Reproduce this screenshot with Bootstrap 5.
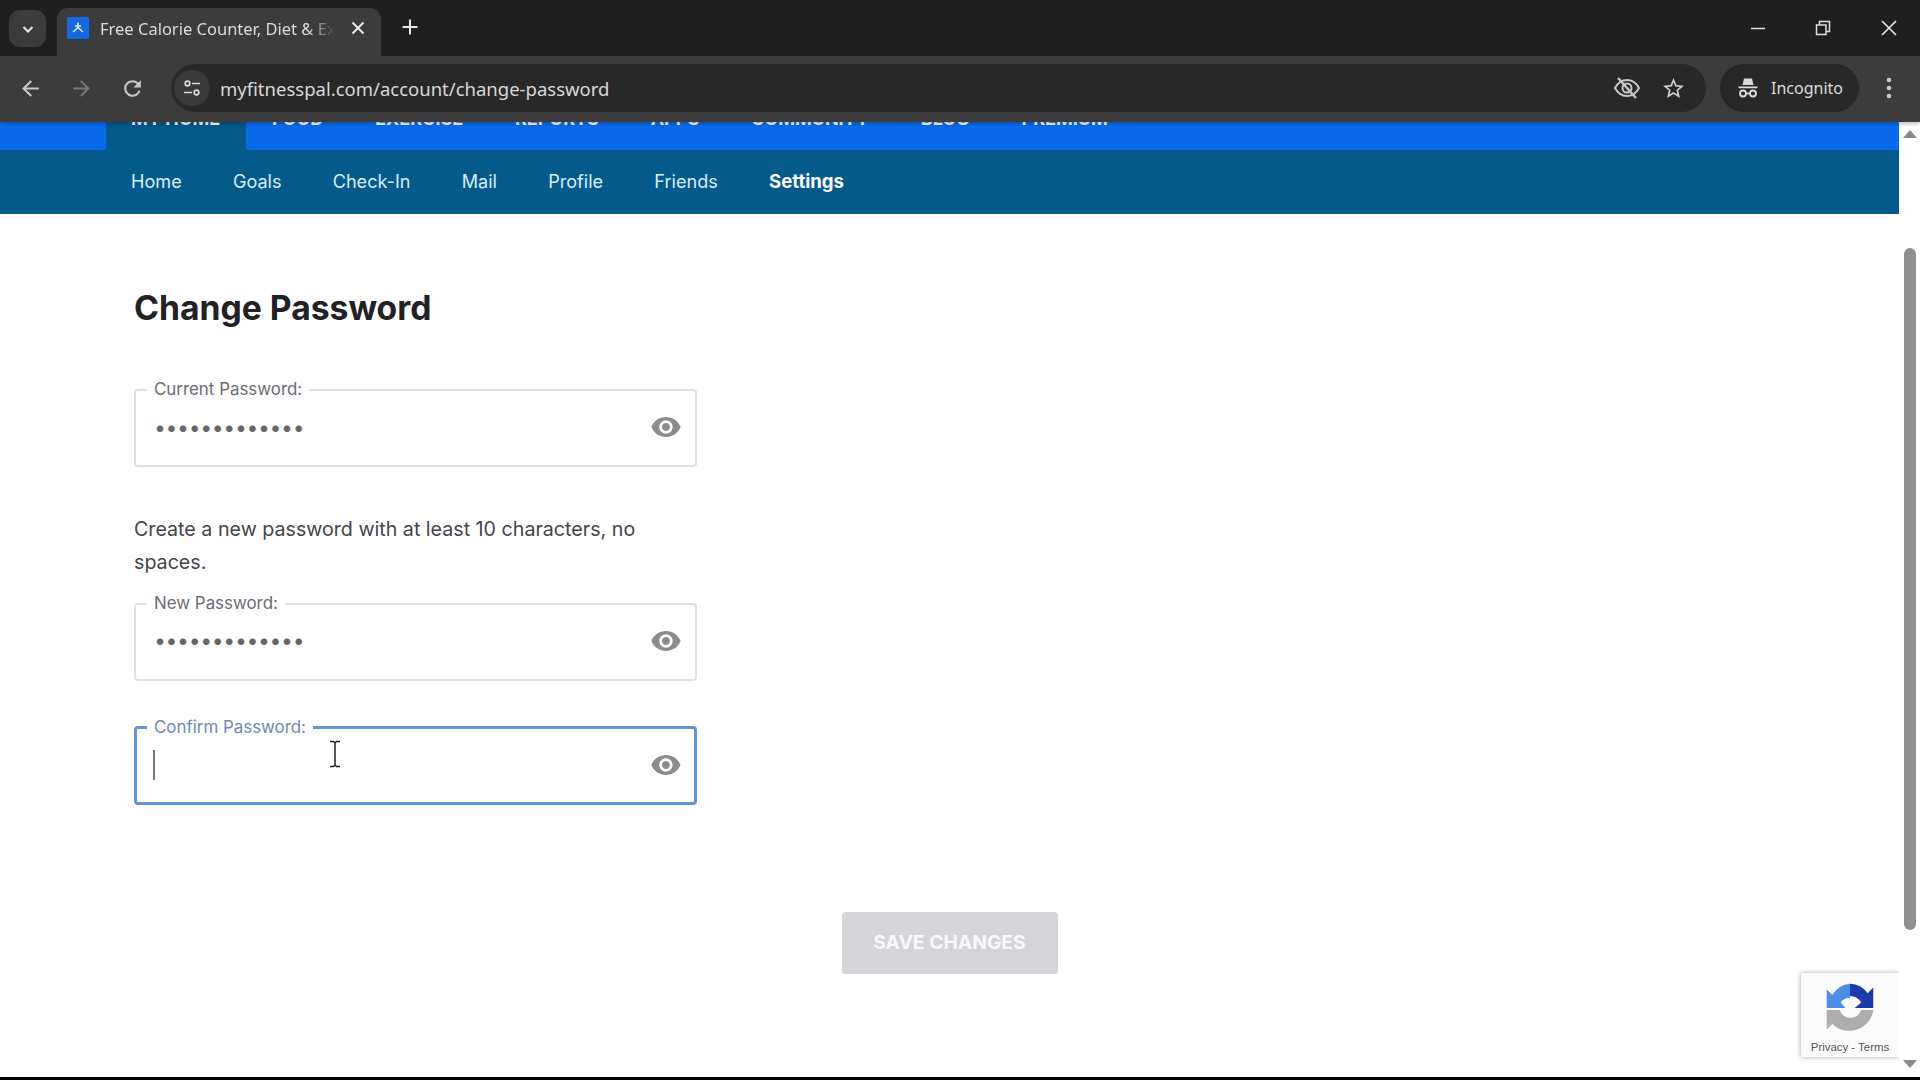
<!DOCTYPE html>
<html lang="en">
<head>
<meta charset="utf-8">
<title>Change Password</title>
<link href="https://cdn.jsdelivr.net/npm/bootstrap@5.3.0/dist/css/bootstrap.min.css" rel="stylesheet">
<style>
html,body{height:100%;overflow:hidden;margin:0;background:#000}
.shell{height:1077px;display:flex;flex-direction:column;font-family:Inter,"Liberation Sans",sans-serif}
.tabstrip{height:56px;background:#1f1f1f;flex:none;color:#e6e6e6}
.tabbtn{width:37px;height:37px;margin:10px 0 0 9px;background:#3b3b3b;border-radius:11px}
.ctab{width:324px;height:48px;margin:8px 0 0 11px;background:#3c3c3c;border-radius:11px 11px 0 0;padding:0 15px 8px 10px;font:16.5px "Noto Sans",Roboto,sans-serif;color:#dcdcdc}
.fav{width:22px;height:22px;background:#1669e0;border-radius:2px;flex:none}
.tabname{width:235px;overflow:hidden;white-space:nowrap;margin-left:11px;-webkit-mask-image:linear-gradient(90deg,#000 88%,transparent);mask-image:linear-gradient(90deg,#000 88%,transparent)}
.plusbox{padding-bottom:2px}
.wctl{margin-left:auto;gap:49px;padding-right:22px}
.toolbar{height:66px;background:#3c3c3c;flex:none;padding:0 0 2px 18px;box-shadow:0 2px 4px rgba(0,0,0,.25);position:relative;z-index:2}
.tbicons{gap:26px;width:144px}
.omni{width:1535px;height:48px;background:#282828;border-radius:24px;padding:0 20.5px 0 3px;margin-left:9px;font:18.500px "Noto Sans",Roboto,sans-serif;color:#d8d8d8;white-space:nowrap}
.sitebtn{width:36px;height:36px;background:#3a3a3a;border-radius:50%;margin-right:10px;flex:none}
.omniend{margin-left:auto;gap:19.5px}
.incog{width:139px;height:48px;background:#282828;border-radius:24px;margin-left:14px;padding-left:17px;gap:12px;font:16px "Noto Sans",Roboto,sans-serif;color:#dcdcdc}
.kebab{margin-left:26px}
.viewport{flex:1;min-height:0;overflow:hidden;background:#fff;position:relative}
.pagecol{flex:1;min-width:0;position:relative}
.bluebar{margin-top:-32px;height:60px;background:#0a6bea;padding-left:106px;font-weight:700;font-size:18px;line-height:24px;color:#fff;text-transform:uppercase}
.bluebar .topitem{padding:17px 25.9px 0 25px;margin-right:.9px}
.bluebar .topon{background:#055a8c}
.subbar{height:64px;background:#055a8c;padding-left:106px;font-size:18.1px;color:#d8eefb}
.subbar .subitem{padding:0 26.2px 0 25px}
.subbar .subon{font-weight:700;font-size:18.6px;color:#fff}
.formwrap{padding:74px 0 0 134px;width:697px;box-sizing:border-box}
.pagetitle{font-size:33.7px;line-height:40px;font-weight:700;color:#212126;margin:0 0 51px}
.pwfield{border:2px solid #e0e0e0;border-radius:4px;padding:0 13.5px 0 17px;margin:0;height:88px}
.pwfield legend{float:none;width:auto;margin:-1px 0 0 -6px;padding:0 7px 2px;font-size:16.9px;line-height:20px;color:#6c6c72}
.pwfield .form-control{border:0;padding:0 0 0 2px;background:transparent;box-shadow:none;font-size:21px;font-weight:700;letter-spacing:1.6px;color:#666;height:64px;border-radius:0}
.fieldbody{height:60px;margin-top:-4px}
.pwfield.focused{border:3px solid #6294d8;padding-left:16px;padding-right:12.5px}
.pwfield.focused legend{color:#6f88b8}
.caretbar{width:2px;height:30px;background:#777;flex:none}
.helptext{font-size:19.67px;line-height:33.3px;color:#45454a;margin:46px 0 13px}
.gapfield{margin-top:36px}
.savebtn{width:216px;height:62px;background:#d4d4d9;border:0;border-radius:4px;color:#f8f8fa;font-weight:700;font-size:19.3px;margin-top:107px}
.savebtn:disabled{background:#d4d4d9;color:#f8f8fa;opacity:1}
.scrolltrack{width:21px;flex:none;background:#fff;position:relative}
.thumb{width:12px;height:682px;background:#8f8f8f;border-radius:6px;margin:126px 0 0 5px}
.arr{width:0;height:0;border-left:7px solid transparent;border-right:7px solid transparent;position:absolute;left:4px}
.arrup{border-bottom:8px solid #8a8a8a;top:8px}
.arrdn{border-top:8px solid #8a8a8a;bottom:9px}
.beam{position:absolute;left:328px;top:618px}
.recap{position:absolute;right:0;bottom:20px;width:98px;height:84px;background:#fbfbfb;box-shadow:0 0 5px rgba(0,0,0,.35);font:11.4px "Liberation Sans",sans-serif;color:#555;padding-top:9px}
.recap svg{display:block;margin:0 auto 5px}
</style>
</head>
<body>
<div class="shell">
  <div class="tabstrip d-flex">
    <div class="tabbtn d-flex align-items-center justify-content-center">
      <svg width="16" height="16" viewBox="0 0 16 16"><path d="M3.5 6 8 10.5 12.500 6" fill="none" stroke="#e6e6e6" stroke-width="2"/></svg>
    </div>
    <div class="ctab d-flex align-items-center">
      <span class="fav d-flex align-items-center justify-content-center">
        <svg width="16" height="16" viewBox="0 0 16 16"><path d="M8 2.500v5M8 7.500 3 12M8 7.500l5 4.500M5 6h6" fill="none" stroke="#dfeaff" stroke-width="1.600"/></svg>
      </span>
      <span class="tabname">Free Calorie Counter, Diet &amp; Exercise</span>
      <svg class="ms-auto" width="16" height="16" viewBox="0 0 16 16"><path d="M2.500 2.500l11 11M13.500 2.500l-11 11" stroke="#e8e8e8" stroke-width="2"/></svg>
    </div>
    <div class="plusbox d-flex align-items-center ms-3 ps-1">
      <svg width="18" height="18" viewBox="0 0 18 18"><path d="M9 1.500v15M1.500 9h15" stroke="#e8e8e8" stroke-width="2"/></svg>
    </div>
    <div class="wctl d-flex align-items-center">
      <svg width="16" height="16" viewBox="0 0 16 16"><path d="M1 8.500h14" stroke="#e0e0e0" stroke-width="1.500"/></svg>
      <svg width="16" height="16" viewBox="0 0 16 16"><path d="M1.500 5h9.500v9.500H1.500zM4.500 4.500V1.500h10v10H11.500" fill="none" stroke="#e0e0e0" stroke-width="1.500"/></svg>
      <svg width="18" height="18" viewBox="0 0 18 18"><path d="M2 2l14 14M16 2 2 16" stroke="#e8e8e8" stroke-width="1.600"/></svg>
    </div>
  </div>

  <div class="toolbar d-flex align-items-center">
    <div class="tbicons d-flex align-items-center">
      <svg width="25" height="25" viewBox="0 0 24 24"><path fill="#c8c8c8" d="M20 11H7.830l5.590-5.590L12 4l-8 8 8 8 1.410-1.410L7.830 13H20z"/></svg>
      <svg width="25" height="25" viewBox="0 0 24 24"><path fill="#787878" d="M4 11h12.170l-5.590-5.590L12 4l8 8-8 8-1.410-1.410L16.170 13H4z"/></svg>
      <svg width="25" height="25" viewBox="0 0 24 24"><path fill="#c8c8c8" d="M17.650 6.350A7.960 7.960 0 0 0 12 4a8 8 0 1 0 7.750 10h-2.080A6 6 0 1 1 12 6c1.660 0 3.140.69 4.220 1.780L13 11h7V4z"/></svg>
    </div>
    <div class="omni d-flex align-items-center">
      <span class="sitebtn d-flex align-items-center justify-content-center">
        <svg width="20" height="20" viewBox="0 0 20 20" fill="none" stroke="#d8d8d8" stroke-width="1.700"><circle cx="5.500" cy="5.500" r="2.300"/><path d="M10 5.500h8M2 14.500h8"/><circle cx="14.500" cy="14.500" r="2.300"/></svg>
      </span>
      <span>myfitnesspal.com/account/change-password</span>
      <div class="omniend d-flex align-items-center">
        <svg width="28" height="28" viewBox="0 0 28 28" fill="none" stroke="#c8c8c8" stroke-width="2"><path d="M2 14c3-5.500 7-8 12-8s9 2.500 12 8c-3 5.500-7 8-12 8S5 19.500 2 14z"/><circle cx="14" cy="14" r="4.500"/><path d="M5 4l18 20" stroke-width="2.400"/></svg>
        <svg width="25" height="25" viewBox="0 0 24 24"><path fill="#d0d0d0" d="M22 9.240l-7.190-.62L12 2 9.190 8.630 2 9.240l5.460 4.730L5.820 21 12 17.270 18.180 21l-1.630-7.030L22 9.240zM12 15.400l-3.760 2.270 1-4.280-3.320-2.880 4.380-.38L12 6.100l1.710 4.040 4.380.38-3.320 2.880 1 4.280L12 15.400z"/></svg>
      </div>
    </div>
    <div class="incog d-flex align-items-center">
      <svg width="22" height="22" viewBox="0 0 22 22"><path fill="#dcdcdc" d="M7 1.500h8l1.500 6.500H5.500zM1.500 9.500h19v1.800h-19z"/><g fill="none" stroke="#dcdcdc" stroke-width="1.800"><circle cx="6" cy="16.500" r="3"/><circle cx="16" cy="16.500" r="3"/><path d="M9 16.500h4"/></g></svg>
      <span>Incognito</span>
    </div>
    <svg class="kebab" width="8" height="24" viewBox="0 0 8 24"><g fill="#c8c8c8"><circle cx="4" cy="4" r="2.300"/><circle cx="4" cy="12" r="2.300"/><circle cx="4" cy="20" r="2.300"/></g></svg>
  </div>

  <div class="viewport d-flex">
    <div class="pagecol">
      <nav class="bluebar d-flex">
        <a class="topitem topon text-white text-decoration-none">My Home</a>
        <a class="topitem text-white text-decoration-none">Food</a>
        <a class="topitem text-white text-decoration-none">Exercise</a>
        <a class="topitem text-white text-decoration-none">Reports</a>
        <a class="topitem text-white text-decoration-none">Apps</a>
        <a class="topitem text-white text-decoration-none">Community</a>
        <a class="topitem text-white text-decoration-none">Blog</a>
        <a class="topitem text-white text-decoration-none">Premium</a>
      </nav>
      <nav class="subbar d-flex align-items-center">
        <span class="subitem">Home</span>
        <span class="subitem">Goals</span>
        <span class="subitem">Check-In</span>
        <span class="subitem">Mail</span>
        <span class="subitem">Profile</span>
        <span class="subitem">Friends</span>
        <span class="subitem subon">Settings</span>
      </nav>
      <main>
        <form class="formwrap">
          <h1 class="pagetitle">Change Password</h1>
          <fieldset class="pwfield">
            <legend>Current Password:</legend>
            <div class="fieldbody d-flex align-items-center">
              <input class="form-control" type="password" value="passwordabcde" aria-label="Current Password">
              <svg width="34" height="34" viewBox="0 0 24 24"><path fill="#8c8c8c" d="M12 4.500C7 4.500 2.730 7.610 1 12c1.730 4.390 6 7.500 11 7.500s9.270-3.110 11-7.500c-1.730-4.390-6-7.500-11-7.500zM12 17c-2.760 0-5-2.240-5-5s2.240-5 5-5 5 2.240 5 5-2.240 5-5 5zm0-8c-1.660 0-3 1.340-3 3s1.340 3 3 3 3-1.340 3-3-1.340-3-3-3z"/></svg>
            </div>
          </fieldset>
          <p class="helptext">Create a new password with at least 10 characters, no spaces.</p>
          <fieldset class="pwfield">
            <legend>New Password:</legend>
            <div class="fieldbody d-flex align-items-center">
              <input class="form-control" type="password" value="passwordabcde" aria-label="New Password">
              <svg width="34" height="34" viewBox="0 0 24 24"><path fill="#8c8c8c" d="M12 4.500C7 4.500 2.730 7.610 1 12c1.730 4.390 6 7.500 11 7.500s9.270-3.110 11-7.500c-1.730-4.390-6-7.500-11-7.500zM12 17c-2.760 0-5-2.240-5-5s2.240-5 5-5 5 2.240 5 5-2.240 5-5 5zm0-8c-1.660 0-3 1.340-3 3s1.340 3 3 3 3-1.340 3-3-1.340-3-3-3z"/></svg>
            </div>
          </fieldset>
          <fieldset class="pwfield focused gapfield">
            <legend>Confirm Password:</legend>
            <div class="fieldbody d-flex align-items-center">
              <span class="caretbar"></span>
              <input class="form-control" type="password" aria-label="Confirm Password">
              <svg width="34" height="34" viewBox="0 0 24 24"><path fill="#8c8c8c" d="M12 4.500C7 4.500 2.730 7.610 1 12c1.730 4.390 6 7.500 11 7.500s9.270-3.110 11-7.500c-1.730-4.390-6-7.500-11-7.500zM12 17c-2.760 0-5-2.240-5-5s2.240-5 5-5 5 2.240 5 5-2.240 5-5 5zm0-8c-1.660 0-3 1.340-3 3s1.340 3 3 3 3-1.340 3-3-1.340-3-3-3z"/></svg>
            </div>
          </fieldset>
        </form>
        <div class="d-flex justify-content-center">
          <button class="btn savebtn" type="button" disabled>SAVE CHANGES</button>
        </div>
      </main>
      <svg class="beam" width="14" height="28" viewBox="0 0 14 28" aria-hidden="true"><path d="M2 1.500h3.500L7 3l1.500-1.500H12M7 3v22M2 26.500h3.500L7 25l1.500 1.500H12" fill="none" stroke="#222" stroke-width="1.500"/></svg>
      <aside class="recap text-center">
        <svg width="54" height="54" viewBox="0 0 58 58">
          <path fill="#4a8eea" d="M29 2v15a12 12 0 0 0-10 5l5 6H4V8l6 6A25 25 0 0 1 29 2z"/>
          <path fill="#1c3aa9" d="M29 2a25 25 0 0 1 19 10l6-6v22H34l7-6a14 14 0 0 0-12-7z"/>
          <path fill="#adadad" d="M4 30h14a12 12 0 0 0 23 0h13a26 26 0 0 1-44 15l-6 6z"/>
        </svg>
        <div>Privacy - Terms</div>
      </aside>
    </div>
    <div class="scrolltrack">
      <div class="arr arrup"></div>
      <div class="thumb"></div>
      <div class="arr arrdn"></div>
    </div>
  </div>
</div>
<script src="https://cdn.jsdelivr.net/npm/bootstrap@5.3.0/dist/js/bootstrap.bundle.min.js"></script>
</body>
</html>
